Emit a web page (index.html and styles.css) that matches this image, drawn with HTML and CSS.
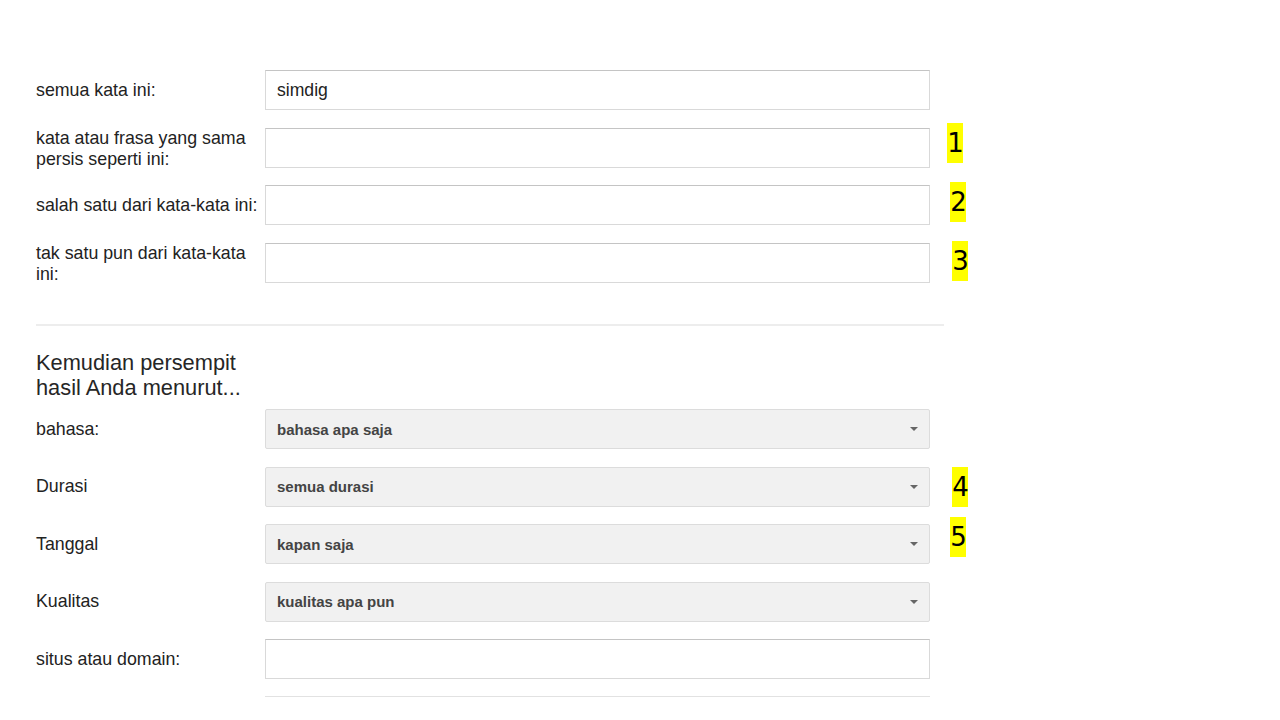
FILE: index.html
```html
<!DOCTYPE html>
<html lang="id">
<head>
<meta charset="utf-8">
<title>Penelusuran Lanjutan</title>
<link rel="stylesheet" href="styles.css">
</head>
<body>
<main class="page">
  <section class="group">
    <div class="row">
      <div class="lbl">semua kata ini:</div>
      <div class="field text-field">simdig</div>
    </div>
    <div class="row">
      <div class="lbl lbl-2">kata atau frasa yang sama persis seperti ini:</div>
      <div class="field text-field"></div>
    </div>
    <div class="row">
      <div class="lbl">salah satu dari kata-kata ini:</div>
      <div class="field text-field"></div>
    </div>
    <div class="row">
      <div class="lbl lbl-2">tak satu pun dari kata-kata ini:</div>
      <div class="field text-field"></div>
    </div>
  </section>

  <div class="sep"></div>

  <h2 class="narrow">Kemudian persempit hasil Anda menurut...</h2>

  <section class="group">
    <div class="row">
      <div class="lbl">bahasa:</div>
      <div class="field select-field"><span>bahasa apa saja</span><i class="caret"></i></div>
    </div>
    <div class="row">
      <div class="lbl">Durasi</div>
      <div class="field select-field"><span>semua durasi</span><i class="caret"></i></div>
    </div>
    <div class="row">
      <div class="lbl">Tanggal</div>
      <div class="field select-field"><span>kapan saja</span><i class="caret"></i></div>
    </div>
    <div class="row">
      <div class="lbl">Kualitas</div>
      <div class="field select-field"><span>kualitas apa pun</span><i class="caret"></i></div>
    </div>
    <div class="row">
      <div class="lbl">situs atau domain:</div>
      <div class="field text-field"></div>
    </div>
  </section>

  <div class="end-line"></div>

  <span class="note note-1">1</span>
  <span class="note note-2">2</span>
  <span class="note note-3">3</span>
  <span class="note note-4">4</span>
  <span class="note note-5">5</span>
</main>
</body>
</html>
```

FILE: styles.css
```css
html, body {
  margin: 0;
  padding: 0;
  background: #ffffff;
}

body {
  font-family: "Liberation Sans", Arial, sans-serif;
  color: #222222;
}

.page {
  position: relative;
  width: 1280px;
  height: 720px;
  box-sizing: border-box;
  padding: 70px 0 0 36px;
  overflow: hidden;
}

.group {
  display: flex;
  flex-direction: column;
  gap: 17.5px;
  width: 894px;
}

.row {
  display: flex;
  align-items: center;
  height: 40px;
}

.lbl {
  flex: 0 0 229px;
  font-size: 17.8px;
  line-height: 20.5px;
  color: #222222;
}

.lbl-2 {
  padding-top: 2px;
}

.field {
  flex: 0 0 665px;
  height: 40px;
  box-sizing: border-box;
  display: flex;
  align-items: center;
}

.text-field {
  border: 1px solid #d9d9d9;
  border-top-color: #c4c4c4;
  background: #ffffff;
  padding: 0 11px;
  font-size: 17.6px;
  color: #222222;
}

.select-field {
  justify-content: space-between;
  background: #f1f1f1;
  border: 1px solid #dcdcdc;
  border-radius: 2px;
  padding: 0 11px 0 11px;
  font-size: 15px;
  font-weight: bold;
  color: #444444;
}

.caret {
  width: 0;
  height: 0;
  border-left: 4.5px solid transparent;
  border-right: 4.5px solid transparent;
  border-top: 4.5px solid #666666;
}

.sep {
  width: 908px;
  height: 2px;
  background: #ededed;
  margin-top: 41px;
}

.narrow {
  margin: 24px 0 9.5px 0;
  width: 229px;
  font-size: 21.8px;
  line-height: 25px;
  font-weight: normal;
  color: #262626;
}

.end-line {
  width: 665px;
  height: 1px;
  background: #e2e2e2;
  margin: 17px 0 0 229px;
}

.note {
  position: absolute;
  width: 16px;
  height: 40px;
  background: #ffff00;
  color: #000000;
  font-family: "DejaVu Sans", sans-serif;
  font-size: 26px;
  line-height: 40px;
  text-align: center;
  letter-spacing: -1px;
}

.note-1 { left: 947px; top: 123px; }
.note-2 { left: 950px; top: 182px; }
.note-3 { left: 952px; top: 241px; }
.note-4 { left: 952px; top: 467px; }
.note-5 { left: 950px; top: 517px; }
```
